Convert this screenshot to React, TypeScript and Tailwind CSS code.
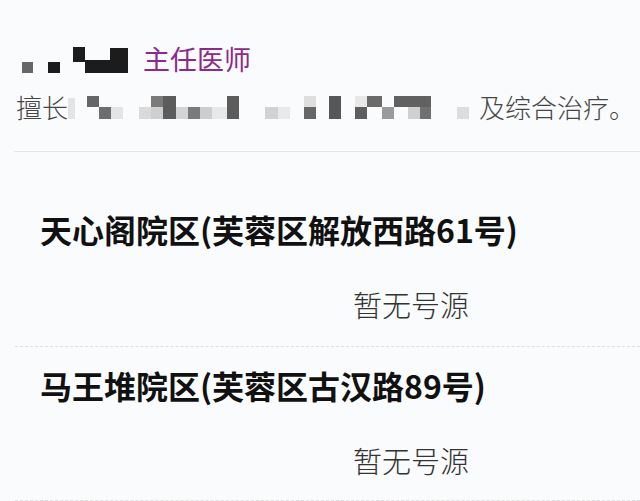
import React from "react";

// pixelated blocks hiding the doctor name
const NAME_BLOCKS: [number, number, number, number, string][] = [
  [2, 17, 11, 11, "#666666"],
  [28, 17, 12, 11, "#1c1c1c"],
  [53, 2, 12, 15, "#1c1c1c"],
  [65, 15, 43, 13, "#1c1c1c"],
  [90, 3, 18, 13, "#1c1c1c"],
];

// pixelated blocks hiding the speciality text
const SKILL_BLOCKS: [number, number, number, number, string][] = [
  [0, 4, 7, 21, "#e4e4e4"],
  [19, 2, 12, 11, "#666666"],
  [31, 13, 12, 12, "#6e6e6e"],
  [43, 13, 12, 12, "#e4e4e4"],
  [71, 13, 12, 12, "#dadada"],
  [83, 2, 12, 11, "#7a7a7a"],
  [83, 13, 12, 12, "#cfcfcf"],
  [95, 2, 13, 23, "#5c5c5c"],
  [108, 13, 12, 12, "#d4d4d4"],
  [120, 13, 12, 12, "#7a7a7a"],
  [132, 13, 12, 12, "#cdcdcd"],
  [144, 13, 15, 12, "#e8e8e8"],
  [159, 2, 12, 23, "#5c5c5c"],
  [197, 13, 13, 12, "#d2d2d2"],
  [210, 13, 12, 12, "#e9e9e9"],
  [236, 2, 12, 11, "#dedede"],
  [236, 13, 12, 12, "#666666"],
  [261, 2, 12, 23, "#575757"],
  [287, 2, 12, 11, "#e8e8e8"],
  [287, 13, 12, 12, "#5e5e5e"],
  [299, 2, 15, 11, "#6a6a6a"],
  [314, 13, 12, 12, "#9a9a9a"],
  [326, 2, 37, 11, "#616161"],
  [340, 13, 12, 12, "#d0d0d0"],
  [352, 13, 11, 12, "#707070"],
  [389, 13, 12, 12, "#dddddd"],
];

const Mosaic = ({
  width,
  height,
  blocks,
}: {
  width: number;
  height: number;
  blocks: [number, number, number, number, string][];
}) => (
  <svg width={width} height={height} viewBox={`0 0 ${width} ${height}`} className="shrink-0">
    {blocks.map(([x, y, w, h, c], i) => (
      <rect key={i} x={x} y={y} width={w} height={h} fill={c} />
    ))}
  </svg>
);

const Campus = ({ name, first }: { name: string; first?: boolean }) => (
  <div
    className={`ml-[15px] border-b border-dashed border-[#dedede] ${
      first ? "pt-[60px] pb-[27px]" : "pt-[21px] pb-[25px]"
    }`}
  >
    <div className="pl-[25px] text-[32px] leading-[34px] font-bold text-[#111111] whitespace-nowrap">
      {name}
    </div>
    <div className="mt-[43px] pl-[338px] text-[29px] leading-[30px] font-light text-[#333333]">
      暂无号源
    </div>
  </div>
);

export default function App() {
  return (
    <div
      className="w-[640px] h-[501px] overflow-hidden bg-[#fafbfc]"
      style={{ fontFamily: '"Noto Sans CJK SC", "Noto Sans", sans-serif' }}
    >
      {/* doctor info */}
      <div className="ml-[14px] pt-[45px] pb-[30px] border-b border-[#e6e6e6]">
        <div className="flex items-center pl-[6px] h-[28px]">
          <Mosaic width={110} height={28} blocks={NAME_BLOCKS} />
          <span className="ml-[13px] text-[27px] leading-[28px] text-[#8c2a8c]">
            主任医师
          </span>
        </div>
        <div className="mt-[20px] flex items-center pl-[2px] h-[28px] text-[26px] leading-[28px] font-light text-[#454545] whitespace-nowrap">
          <span>擅长</span>
          <Mosaic width={404} height={26} blocks={SKILL_BLOCKS} />
          <span className="ml-[7px]">及综合治疗。</span>
        </div>
      </div>

      <Campus name="天心阁院区(芙蓉区解放西路61号)" first />
      <Campus name="马王堆院区(芙蓉区古汉路89号)" />
    </div>
  );
}
